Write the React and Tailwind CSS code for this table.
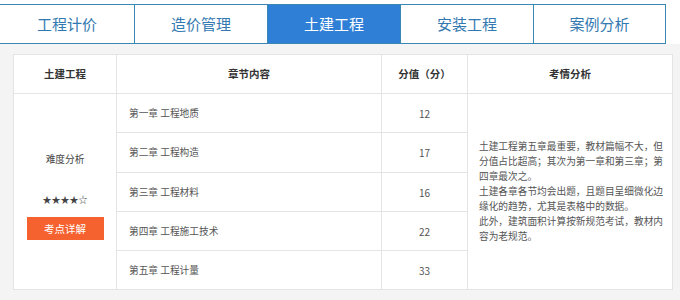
import React from "react";

const tabs = ["工程计价", "造价管理", "土建工程", "安装工程", "案例分析"];
const tabW = ["w-[135px]", "w-[133px]", "w-[133px]", "w-[133px]", "w-[132px]"];
const rows = [
  ["第一章 工程地质", "12"],
  ["第二章 工程构造", "17"],
  ["第三章 工程材料", "16"],
  ["第四章 工程施工技术", "22"],
  ["第五章 工程计量", "33"],
];
const analysis = [
  "土建工程第五章最重要，教材篇幅不大，但",
  "分值占比超高；其次为第一章和第三章；第",
  "四章最次之。",
  "土建各章各节均会出题，且题目呈细微化边",
  "缘化的趋势，尤其是表格中的数据。",
  "此外，建筑面积计算按新规范考试，教材内",
  "容为老规范。",
];

export default function App() {
  return (
    <div
      className="w-[680px] h-[300px] bg-white overflow-hidden"
      style={{ fontFamily: '"Noto Sans CJK SC", "Microsoft YaHei", sans-serif' }}
    >
      <div className="pt-[4px] bg-white">
        <div className="flex w-[666px] h-[40px] border-y border-[#3b87b3]">
          {tabs.map((t, i) => (
            <div
              key={t}
              className={`${tabW[i]} h-full flex items-center justify-center text-[15px] border-r ${
                i === 2
                  ? "bg-[#2f7fd6] text-white border-[#3b87b3]"
                  : "bg-white text-[#3379b1] border-[#3b87b3]"
              }`}
            >
              {t}
            </div>
          ))}
        </div>
      </div>
      <div className="bg-[#f4f4f4] h-[256px] pt-[10px] pl-[13px]">
        <div className="w-[660px] border border-[#e4e4e4] bg-[#e4e4e4] grid grid-cols-[102px_264px_85px_204px] grid-rows-[38px_38px_39px_38px_38px_38px] gap-px">
          <div className="bg-white flex items-center justify-center text-[10.5px] font-bold text-[#333]">土建工程</div>
          <div className="bg-white flex items-center justify-center text-[10.5px] font-bold text-[#333]">章节内容</div>
          <div className="bg-white flex items-center justify-center text-[10.5px] font-bold text-[#333]">分值（分）</div>
          <div className="bg-white flex items-center justify-center text-[10.5px] font-bold text-[#333]">考情分析</div>

          <div className="bg-white row-start-2 row-span-5 col-start-1 flex flex-col items-center pt-[58px] text-[9.7px] text-[#444]">
            <div className="leading-[15px]">难度分析</div>
            <div className="leading-[15px] mt-[25px] text-[9px]">★★★★☆</div>
            <div className="mt-[10px] w-[77px] h-[23px] bg-[#f5622f] text-white text-[10.5px] flex items-center justify-center">
              考点详解
            </div>
          </div>

          {rows.map(([name, score], i) => (
            <React.Fragment key={name}>
              <div
                className="bg-white col-start-2 flex items-center pl-[12px] text-[9.7px] text-[#555]"
                style={{ gridRowStart: i + 2 }}
              >
                {name}
              </div>
              <div
                className="bg-white col-start-3 flex items-center justify-center text-[10px] text-[#555]"
                style={{ gridRowStart: i + 2 }}
              >
                {score}
              </div>
            </React.Fragment>
          ))}

          <div className="bg-white row-start-2 row-span-5 col-start-4 flex flex-col justify-center pl-[11px] text-[9.7px] leading-[15px] text-[#555]">
            {analysis.map((l) => (
              <div key={l} className="whitespace-nowrap">{l}</div>
            ))}
          </div>
        </div>
      </div>
    </div>
  );
}
